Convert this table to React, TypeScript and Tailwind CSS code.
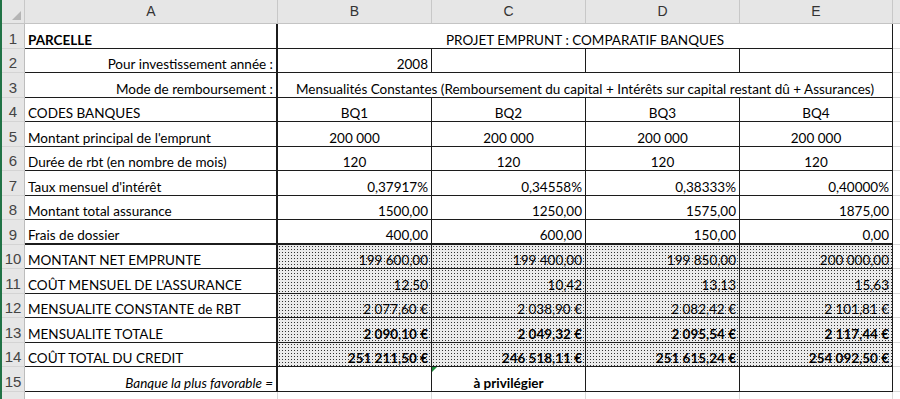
import React from 'react';

// cellule de tableur : bordure noire en bas / à droite, texte calé en bas
type Align = 'l' | 'c' | 'r';

const alignCls: Record<Align, string> = {
  l: 'justify-start',
  c: 'justify-center',
  r: 'justify-end',
};

const dots =
  'bg-[#ebebeb] bg-[radial-gradient(circle_at_1.5px_1.5px,#333_0.5px,transparent_0.75px)] bg-[length:3px_3px]';

function Cell({
  w,
  children,
  align = 'l',
  bold,
  italic,
  pattern,
  thickBottom,
  thickRight,
  className = '',
}: {
  w: string;
  children?: React.ReactNode;
  align?: Align;
  bold?: boolean;
  italic?: boolean;
  pattern?: boolean;
  thickBottom?: boolean;
  thickRight?: boolean;
  className?: string;
}) {
  return (
    <div
      className={`${w} shrink-0 h-full flex items-end px-[3px] pb-[1px] leading-[14px] whitespace-nowrap border-[#1c1c1c] ${
        thickBottom ? 'border-b-2' : 'border-b'
      } ${thickRight ? 'border-r-2' : 'border-r'} ${alignCls[align]} ${
        bold ? 'font-bold' : ''
      } ${italic ? 'italic' : ''} ${pattern ? dots : 'bg-white'} ${className}`}
    >
      {children}
    </div>
  );
}

function RowHead({ n }: { n: number }) {
  return (
    <div className="w-[23px] shrink-0 h-full flex items-end justify-center pb-[1px] leading-[16px] bg-[#e6e6e6] border-r border-r-[#bdbdbd] border-b border-b-[#d4d4d4] text-[15px] text-[#444] font-['Liberation_Sans',sans-serif]">
      {n}
    </div>
  );
}

function Tail() {
  return <div className="flex-1 h-full border-b border-[#dadada] bg-white" />;
}

const colW = ['w-[154px]', 'w-[154px]', 'w-[154px]', 'w-[153px]'];

type Line = {
  n: number;
  label: string;
  values: string[];
  align: Align;
  bold?: boolean;
  pattern?: boolean;
  thickBottom?: boolean;
};

const lines: Line[] = [
  { n: 4, label: 'CODES BANQUES', values: ['BQ1', 'BQ2', 'BQ3', 'BQ4'], align: 'c' },
  { n: 5, label: "Montant principal de l'emprunt", values: ['200 000', '200 000', '200 000', '200 000'], align: 'c' },
  { n: 6, label: 'Durée de rbt (en nombre de mois)', values: ['120', '120', '120', '120'], align: 'c' },
  { n: 7, label: "Taux mensuel d'intérêt", values: ['0,37917%', '0,34558%', '0,38333%', '0,40000%'], align: 'r' },
  { n: 8, label: 'Montant total assurance', values: ['1500,00', '1250,00', '1575,00', '1875,00'], align: 'r' },
  { n: 9, label: 'Frais de dossier', values: ['400,00', '600,00', '150,00', '0,00'], align: 'r', thickBottom: true },
  { n: 10, label: 'MONTANT NET EMPRUNTE', values: ['199 600,00', '199 400,00', '199 850,00', '200 000,00'], align: 'r', pattern: true },
  { n: 11, label: "COÛT MENSUEL DE L'ASSURANCE", values: ['12,50', '10,42', '13,13', '15,63'], align: 'r', pattern: true },
  { n: 12, label: 'MENSUALITE CONSTANTE de RBT', values: ['2 077,60 €', '2 038,90 €', '2 082,42 €', '2 101,81 €'], align: 'r', pattern: true },
  { n: 13, label: 'MENSUALITE TOTALE', values: ['2 090,10 €', '2 049,32 €', '2 095,54 €', '2 117,44 €'], align: 'r', pattern: true, bold: true },
  { n: 14, label: 'COÛT TOTAL DU CREDIT', values: ['251 211,50 €', '246 518,11 €', '251 615,24 €', '254 092,50 €'], align: 'r', pattern: true, bold: true },
];

const rowCls = 'flex h-[24.5px]';

export default function App() {
  return (
    <div className="w-[900px] h-[399px] overflow-hidden bg-white border-l-2 border-[#217346] text-[13.5px] text-black font-['Lato','Noto_Sans',sans-serif]">
      {/* en-tête des colonnes */}
      <div className="flex h-[24px] bg-[#e6e6e6] border-b border-[#c4c4c4] text-[14px] text-[#333] font-['Liberation_Sans',sans-serif]">
        <div className="w-[23px] shrink-0 relative border-r border-[#c8c8c8]">
          <div className="absolute right-[3px] bottom-[3px] w-0 h-0 border-l-[9px] border-l-transparent border-b-[9px] border-b-[#b5b5b5]" />
        </div>
        <div className="w-[253px] shrink-0 flex items-center justify-center border-r border-[#c8c8c8]">A</div>
        {['B', 'C', 'D', 'E'].map((c, i) => (
          <div key={c} className={`${colW[i]} shrink-0 flex items-center justify-center border-r border-[#c8c8c8]`}>
            {c}
          </div>
        ))}
        <div className="flex-1" />
      </div>

      {/* ligne 1 */}
      <div className={rowCls}>
        <RowHead n={1} />
        <Cell w="w-[253px]" bold thickRight>PARCELLE</Cell>
        <Cell w="w-[615px]" align="c">PROJET EMPRUNT : COMPARATIF BANQUES</Cell>
        <Tail />
      </div>

      {/* ligne 2 */}
      <div className={rowCls}>
        <RowHead n={2} />
        <Cell w="w-[253px]" align="r" thickRight>Pour investissement année :</Cell>
        <Cell w={colW[0]} align="r">2008</Cell>
        <Cell w={colW[1]} />
        <Cell w={colW[2]} />
        <Cell w={colW[3]} />
        <Tail />
      </div>

      {/* ligne 3 */}
      <div className={rowCls}>
        <RowHead n={3} />
        <Cell w="w-[253px]" align="r" thickRight>Mode de remboursement :</Cell>
        <Cell w="w-[615px]" align="c">
          Mensualités Constantes (Remboursement du capital + Intérêts sur capital restant dû + Assurances)
        </Cell>
        <Tail />
      </div>

      {lines.map((l) => (
        <div key={l.n} className={rowCls}>
          <RowHead n={l.n} />
          <Cell w="w-[253px]" thickRight thickBottom={l.thickBottom}>
            {l.label}
          </Cell>
          {l.values.map((v, i) => (
            <Cell
              key={i}
              w={colW[i]}
              align={l.align}
              bold={l.bold}
              pattern={l.pattern}
              thickBottom={l.thickBottom}
            >
              {v}
            </Cell>
          ))}
          <Tail />
        </div>
      ))}

      {/* ligne 15 */}
      <div className={rowCls}>
        <RowHead n={15} />
        <Cell w="w-[253px]" align="r" italic thickRight>Banque la plus favorable =</Cell>
        <Cell w={colW[0]} />
        <Cell w={colW[1]} align="c" bold className="relative">
          <span className="absolute left-0 top-0 w-0 h-0 border-t-[5px] border-t-[#1e8c3c] border-r-[5px] border-r-transparent" />
          à privilégier
        </Cell>
        <Cell w={colW[2]} />
        <Cell w={colW[3]} />
        <Tail />
      </div>

      {/* ligne 16, coupée */}
      <div className={rowCls}>
        <RowHead n={16} />
        <div className="w-[253px] shrink-0 h-full border-r border-[#dadada]" />
        {colW.map((w, i) => (
          <div key={i} className={`${w} shrink-0 h-full border-r border-[#dadada]`} />
        ))}
        <Tail />
      </div>
    </div>
  );
}
